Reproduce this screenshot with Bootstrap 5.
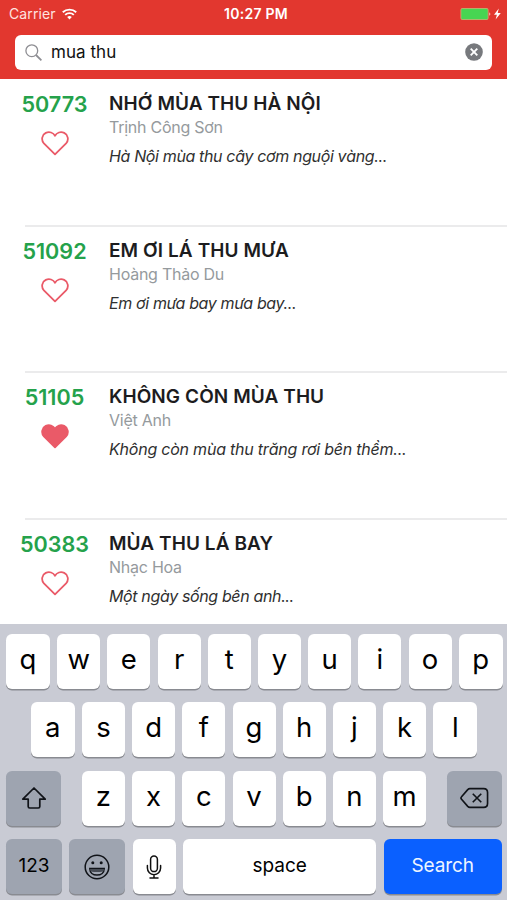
<!DOCTYPE html>
<html lang="vi">
<head>
<meta charset="utf-8">
<meta name="viewport" content="width=device-width, initial-scale=1">
<title>mua thu</title>
<link href="https://cdn.jsdelivr.net/npm/bootstrap@5.3.0/dist/css/bootstrap.min.css" rel="stylesheet">
<style>
body{font-family:Inter,"Liberation Sans",sans-serif;height:900px;color:#1c1c1e;line-height:1}
svg{display:block;flex:none}
.app-head{background:#e2372f;height:79px;color:#fff}
.status{height:27px;font-size:14px;padding:0 6px 0 9px;display:grid;grid-template-columns:1fr auto 1fr}
.carrier{letter-spacing:.1px;color:#ffe3e0;margin-right:6.5px}
.clock{font-weight:600;font-size:14px;letter-spacing:.25px;padding-left:2px}
.search{margin:8px 15px 0 15px;height:34.5px;border-radius:6px;color:#111;padding:0 9px 0 10px}
.search .q{font-size:17px;margin-left:9px;letter-spacing:.05px}
.results{height:545px}
.song{height:146.6px;padding-top:12px}
.song+.song .line{border-top:2px solid #ebebec}
.line{margin-left:25px;height:2px;margin-top:-13px;margin-bottom:11px}
.num{width:109px;padding-top:2px;color:#25a24b;font-weight:600;font-size:21.6px;line-height:22px}
.num svg{margin-top:16px}
.title{font-size:19px;line-height:24px;font-weight:600;letter-spacing:.08px;padding-top:1px}
.artist{font-size:16px;line-height:24px;color:#959a9d;letter-spacing:-.25px;margin-top:-1px}
.lyric{font-size:16px;line-height:24px;margin-top:5px;font-style:italic;color:#303030;letter-spacing:-.36px}
.lyric.roomy{letter-spacing:-.22px}
.keyboard{background:#c9cbd4;height:276px;padding:9.5px 5px 0 6px;gap:13.5px}
.krow{height:55px;gap:7.2px}
.key{background:#fff;border-radius:6px;box-shadow:0 1.5px 0 #898b91;width:43px;height:55px;font-size:27.5px;font-weight:400;color:#000;flex:none;padding-bottom:3px}
.key.edge{width:44px}
.key.gray{background:#9ea4b0;width:55px;padding:0}
.key.word{font-size:19px;font-weight:400;padding-bottom:2px}
.key.num-key{width:56px}
.key.mic{padding:1px 0 0}
.key.space{width:193px}
.key.go{background:#0a60ff;color:#eef5ff;width:118.5px;letter-spacing:-.1px}
</style>
</head>
<body class="bg-white overflow-hidden">
<header class="app-head">
  <div class="status align-items-center">
    <div class="d-flex align-items-center"><span class="carrier">Carrier</span>
      <svg width="15" height="12" viewBox="0 0 15 12" fill="none" stroke="#fff" stroke-width="1.9"><path d="M.8 4.3a9.6 9.6 0 0 1 13.4 0M3.2 6.9a6.2 6.2 0 0 1 8.6 0"/><path d="M7.5 11.5 5.2 9.1a3.4 3.4 0 0 1 4.6 0z" fill="#fff" stroke="none"/></svg></div>
    <div class="clock">10:27 PM</div>
    <div class="d-flex justify-content-end align-items-center">
      <svg width="41" height="14" viewBox="0 0 41 14"><rect x=".5" y="1" width="28" height="12" rx="2" fill="#d7a574"/><rect x="1.3" y="1.8" width="26.4" height="10.4" rx="1" fill="#47d552"/><path d="M29.3 5.2q2 1.8 0 3.6z" fill="#ffd7d2"/><path d="M38.8 1.6 34 7.7h2.9L35.6 12.4l5.2-6.4h-3.1z" fill="#fff"/></svg></div>
  </div>
  <div class="search bg-white d-flex align-items-center">
    <svg width="17" height="17" viewBox="0 0 17 17" fill="none" stroke="#8e8e93" stroke-width="1.3"><circle cx="6.8" cy="6.7" r="5.9"/><path d="m11 11 5.4 5.3" stroke-width="1.8"/></svg>
    <span class="q">mua thu</span>
    <svg class="ms-auto" width="18" height="18" viewBox="0 0 18 18"><circle cx="9" cy="9" r="8.8" fill="#77797d"/><path d="m5.7 5.7 6.6 6.6m0-6.6-6.6 6.6" stroke="#fff" stroke-width="1.9"/></svg>
  </div>
</header>
<svg width="0" height="0" class="d-none"><defs><path id="heart" d="M14 23.4 2.9 12.3C-.1 9 .9 3.8 4.8 1.9 8.3.2 12.3 1.6 14 4.7 15.7 1.6 19.7.2 23.2 1.9c3.9 1.9 4.9 7.1 1.9 10.4z" stroke="#ea5a68" stroke-width="1.8" stroke-linejoin="round"/></defs></svg>
<main class="results overflow-hidden">
  <article class="song"><div class="line"></div><div class="d-flex">
    <div class="num d-flex flex-column align-items-center"><span>50773</span><svg width="28" height="25" fill="none"><use href="#heart"/></svg></div>
    <div><div class="title">NHỚ MÙA THU HÀ NỘI</div><div class="artist">Trịnh Công Sơn</div><div class="lyric">Hà Nội mùa thu cây cơm nguội vàng...</div></div></div></article>
  <article class="song"><div class="line"></div><div class="d-flex">
    <div class="num d-flex flex-column align-items-center"><span>51092</span><svg width="28" height="25" fill="none"><use href="#heart"/></svg></div>
    <div><div class="title">EM ƠI LÁ THU MƯA</div><div class="artist">Hoàng Thảo Du</div><div class="lyric">Em ơi mưa bay mưa bay...</div></div></div></article>
  <article class="song"><div class="line"></div><div class="d-flex">
    <div class="num d-flex flex-column align-items-center"><span>51105</span><svg width="28" height="25" fill="#ea5a68"><use href="#heart"/></svg></div>
    <div><div class="title">KHÔNG CÒN MÙA THU</div><div class="artist">Việt Anh</div><div class="lyric roomy">Không còn mùa thu trăng rơi bên thềm...</div></div></div></article>
  <article class="song"><div class="line"></div><div class="d-flex">
    <div class="num d-flex flex-column align-items-center"><span>50383</span><svg width="28" height="25" fill="none"><use href="#heart"/></svg></div>
    <div><div class="title">MÙA THU LÁ BAY</div><div class="artist">Nhạc Hoa</div><div class="lyric">Một ngày sống bên anh...</div></div></div></article>
</main>
<section class="keyboard d-flex flex-column">
  <div class="krow d-flex justify-content-between">
    <div class="key edge d-flex align-items-center justify-content-center">q</div><div class="key d-flex align-items-center justify-content-center">w</div><div class="key d-flex align-items-center justify-content-center">e</div><div class="key d-flex align-items-center justify-content-center">r</div><div class="key d-flex align-items-center justify-content-center">t</div><div class="key d-flex align-items-center justify-content-center">y</div><div class="key d-flex align-items-center justify-content-center">u</div><div class="key d-flex align-items-center justify-content-center">i</div><div class="key d-flex align-items-center justify-content-center">o</div><div class="key edge d-flex align-items-center justify-content-center">p</div>
  </div>
  <div class="krow d-flex justify-content-center">
    <div class="key edge d-flex align-items-center justify-content-center">a</div><div class="key d-flex align-items-center justify-content-center">s</div><div class="key d-flex align-items-center justify-content-center">d</div><div class="key d-flex align-items-center justify-content-center">f</div><div class="key d-flex align-items-center justify-content-center">g</div><div class="key d-flex align-items-center justify-content-center">h</div><div class="key d-flex align-items-center justify-content-center">j</div><div class="key d-flex align-items-center justify-content-center">k</div><div class="key edge d-flex align-items-center justify-content-center">l</div>
  </div>
  <div class="krow d-flex justify-content-between">
    <div class="key gray d-flex align-items-center justify-content-center"><svg width="26" height="24" viewBox="0 0 26 24" fill="none" stroke="#101318" stroke-width="1.7" stroke-linejoin="round"><path d="M13 2 1.8 13.2h5.4v7.3q0 1.5 1.5 1.5h8.6q1.5 0 1.5-1.5v-7.3h5.4z"/></svg></div>
    <div class="krow d-flex">
      <div class="key d-flex align-items-center justify-content-center">z</div><div class="key d-flex align-items-center justify-content-center">x</div><div class="key d-flex align-items-center justify-content-center">c</div><div class="key d-flex align-items-center justify-content-center">v</div><div class="key d-flex align-items-center justify-content-center">b</div><div class="key d-flex align-items-center justify-content-center">n</div><div class="key d-flex align-items-center justify-content-center">m</div>
    </div>
    <div class="key gray d-flex align-items-center justify-content-center"><svg width="29" height="22" viewBox="0 0 30 22" fill="none" stroke="#101318" stroke-width="1.7" stroke-linejoin="round"><path d="M10.2 1.3h14.3q4 0 4 4v11.4q0 4-4 4H10.2q-1.2 0-2.2-1L1.6 12.3q-1.2-1.3 0-2.6L8 2.3q1-1 2.2-1zM13.2 6.6l8.8 8.8m0-8.8-8.8 8.8"/></svg></div>
  </div>
  <div class="krow d-flex justify-content-between">
    <div class="key gray word num-key d-flex align-items-center justify-content-center">123</div>
    <div class="key gray num-key d-flex align-items-center justify-content-center"><svg width="26" height="26" viewBox="0 0 26 26" fill="none" stroke="#101318" stroke-width="1.5"><circle cx="13" cy="13" r="11.8"/><circle cx="8.8" cy="8.8" r="1.5" fill="#101318" stroke="none"/><circle cx="17.2" cy="8.8" r="1.5" fill="#101318" stroke="none"/><path d="M5.8 14.4h14.4c0 4.2-3.2 6.7-7.2 6.7s-7.2-2.5-7.2-6.7z"/><path d="M6.1 15h13.8q-.1 1.4-.7 2.4-6.2 1.3-12.4 0-.6-1-.7-2.4z" fill="#464b54" stroke="none"/></svg></div>
    <div class="key mic d-flex align-items-center justify-content-center"><svg width="16" height="24" viewBox="0 0 16 24" fill="none" stroke="#101010" stroke-width="1.5" stroke-linecap="round"><rect x="4.6" y="1" width="6.8" height="15.6" rx="3.4"/><path d="M1.4 10.5v2.6a6.6 6.6 0 0 0 13.2 0v-2.6M8 19.7v3M4 23h8"/></svg></div>
    <div class="key word space d-flex align-items-center justify-content-center">space</div>
    <div class="key word go d-flex align-items-center justify-content-center">Search</div>
  </div>
</section>
<script src="https://cdn.jsdelivr.net/npm/bootstrap@5.3.0/dist/js/bootstrap.bundle.min.js"></script>
</body>
</html>
